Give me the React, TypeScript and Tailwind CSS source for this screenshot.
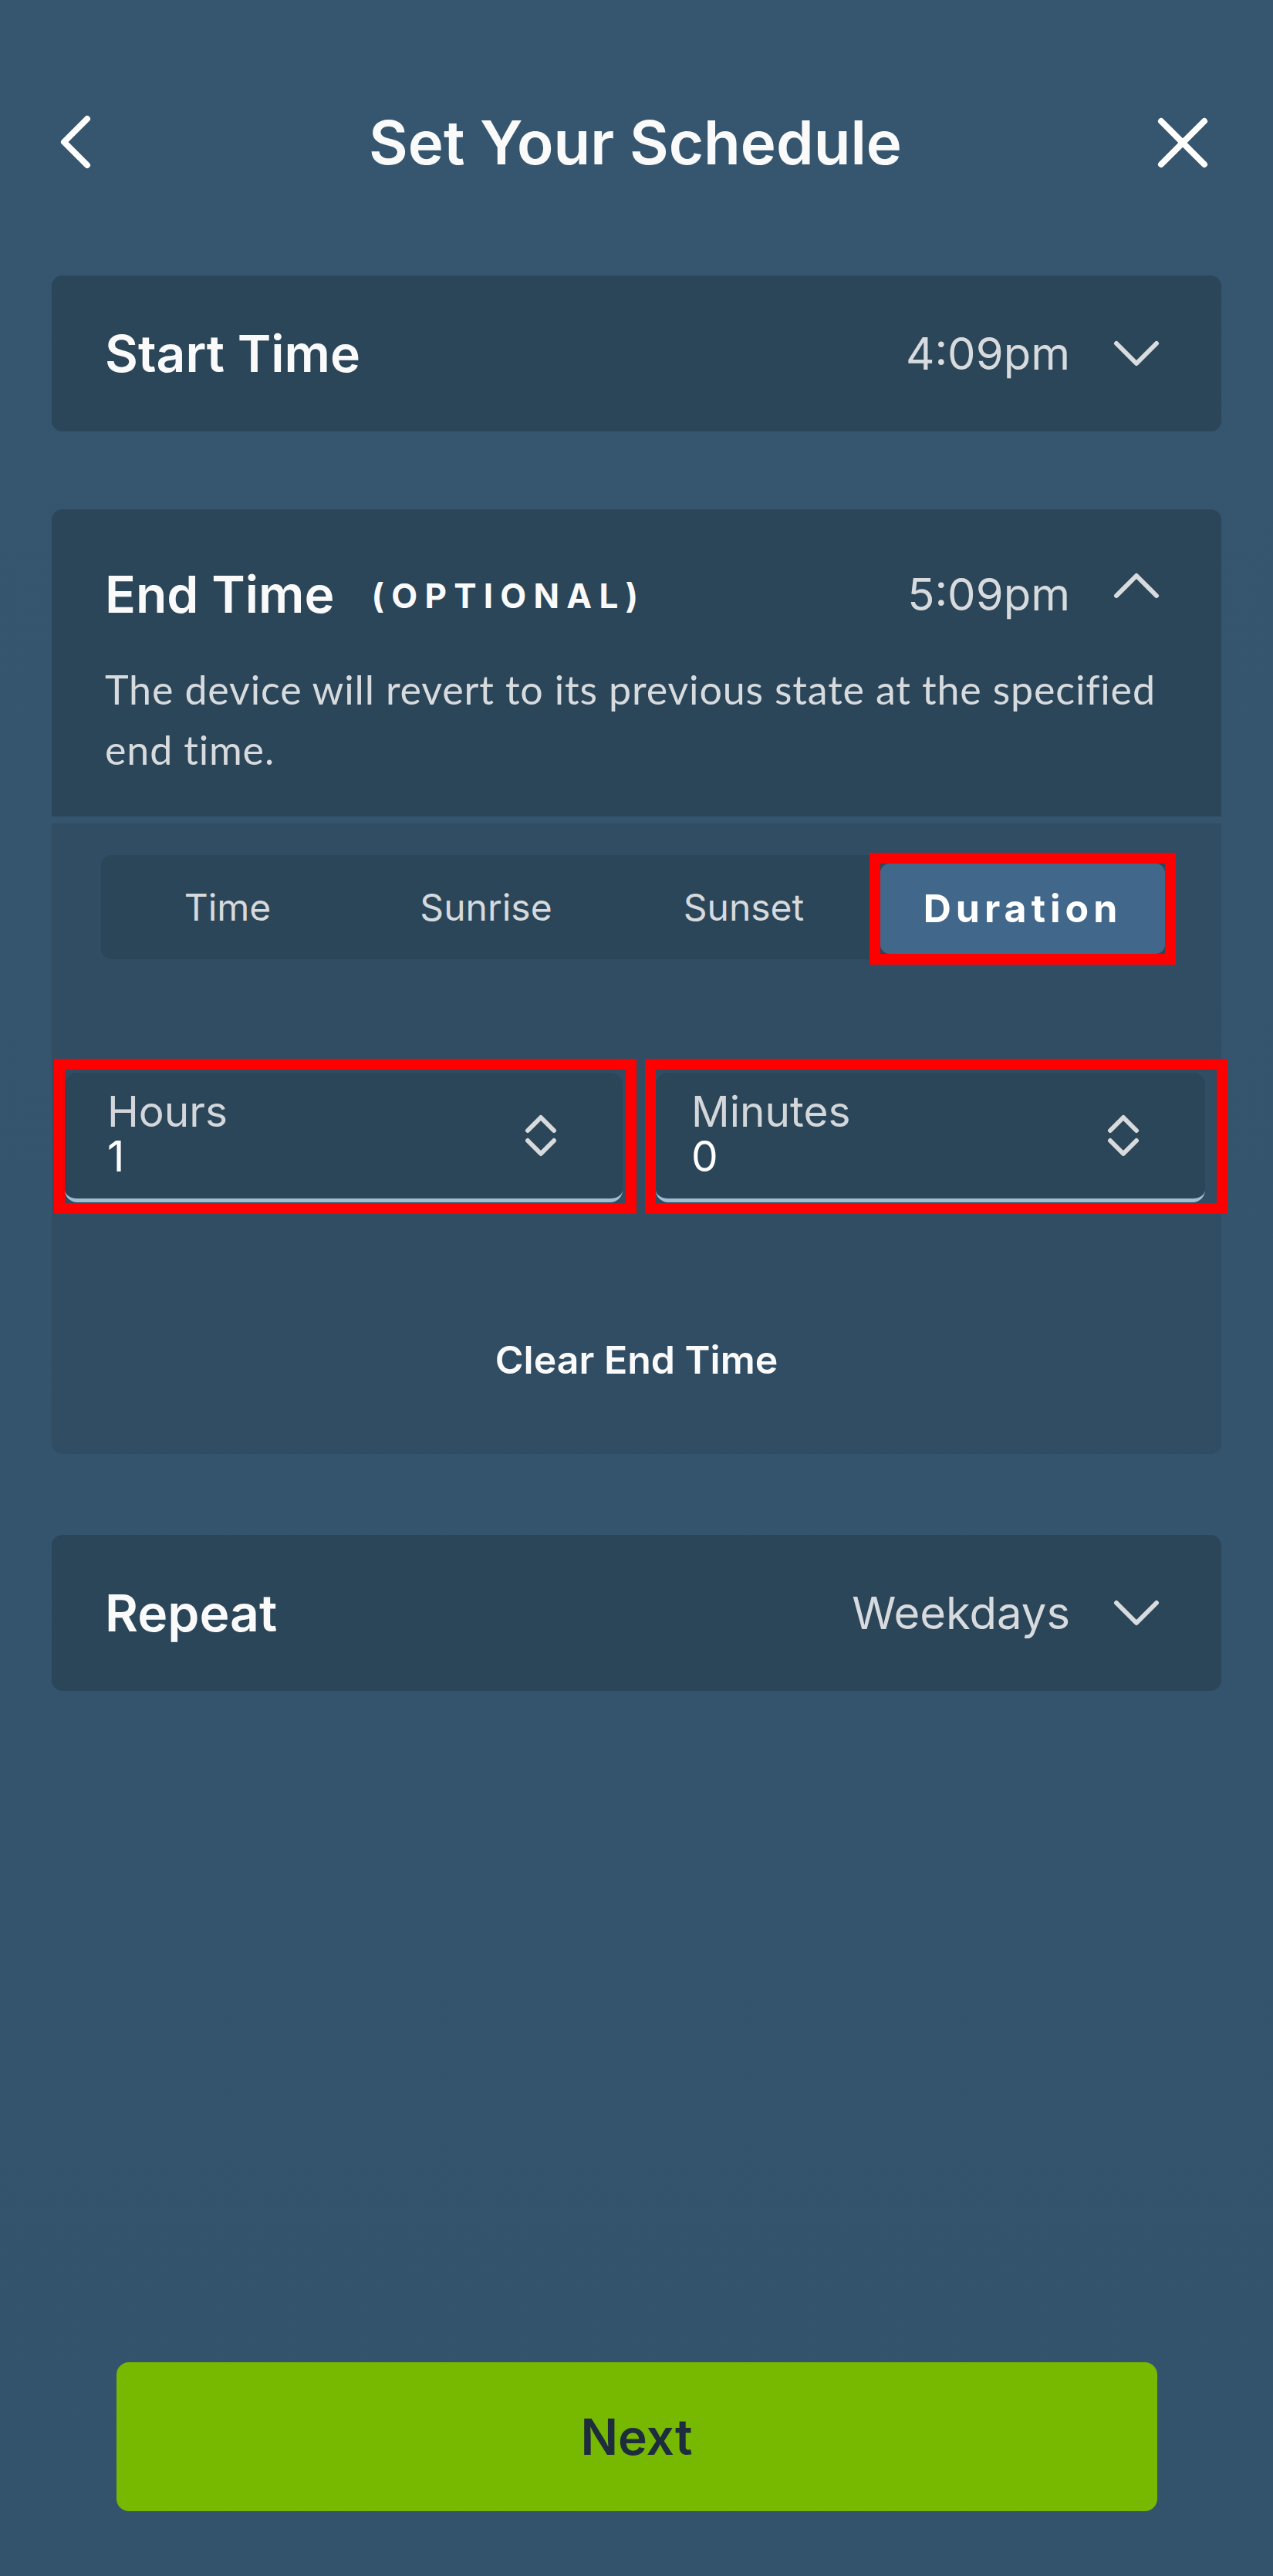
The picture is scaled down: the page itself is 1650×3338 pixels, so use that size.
import React from "react";

function ChevronLeft() {
  return (
    <svg width="44" height="72" viewBox="0 0 44 72" fill="none">
      <path d="M35 5 L5 35 L35 65" stroke="#ffffff" strokeWidth="8" strokeLinecap="round" strokeLinejoin="round" />
    </svg>
  );
}

function CloseIcon() {
  return (
    <svg width="72" height="72" viewBox="0 0 72 72" fill="none">
      <path d="M8 8 L64 64 M64 8 L8 64" stroke="#ffffff" strokeWidth="8" strokeLinecap="round" />
    </svg>
  );
}

function ChevronDown() {
  return (
    <svg width="60" height="36" viewBox="0 0 60 36" fill="none">
      <path d="M4 5 L30 31 L56 5" stroke="#d9dcdf" strokeWidth="6" strokeLinecap="round" strokeLinejoin="round" />
    </svg>
  );
}

function ChevronUp() {
  return (
    <svg width="60" height="36" viewBox="0 0 60 36" fill="none">
      <path d="M4 31 L30 5 L56 31" stroke="#d9dcdf" strokeWidth="6" strokeLinecap="round" strokeLinejoin="round" />
    </svg>
  );
}

function UpDown() {
  return (
    <svg width="44" height="56" viewBox="0 0 44 56" fill="none">
      <path d="M5 21 L22 4 L39 21 M5 34 L22 51 L39 34" stroke="#d8dadc" strokeWidth="6" strokeLinecap="round" strokeLinejoin="round" />
    </svg>
  );
}

function RowCard({ label, value }: { label: string; value: string }) {
  return (
    <div className="flex h-[202px] items-center justify-between rounded-[14px] bg-[#2b4559] pl-[69px] pr-[80px]">
      <span className="text-[66px] font-semibold text-[#fafafa]">{label}</span>
      <div className="flex items-center gap-[56px]">
        <span className="text-[58px] text-[#d7dbde]">{value}</span>
        <ChevronDown />
      </div>
    </div>
  );
}

function NumberField({ label, value, className }: { label: string; value: string; className: string }) {
  return (
    <div className="w-[755px] shrink-0 border-[14px] border-[#ff0000]">
      <div
        className={
          "mt-[4px] mb-[1px] flex h-[168px] items-center justify-between rounded-[16px] border-b-[5px] border-[#a1bdd2] bg-[#2b4559] pr-[84px] " +
          className
        }
      >
        <div className="flex flex-col pb-[6px]">
          <span className="text-[55px] leading-[58px] text-[#d3d7da]">{label}</span>
          <span className="text-[55px] leading-[58px] text-[#ffffff]">{value}</span>
        </div>
        <UpDown />
      </div>
    </div>
  );
}

export default function App() {
  const tabs = [
    { label: "Time", w: "w-[328px]" },
    { label: "Sunrise", w: "w-[342px]" },
    { label: "Sunset", w: "w-[326px]" },
  ];

  return (
    <div className="flex h-[3338px] w-[1650px] flex-col bg-gradient-to-b from-[#36566f] to-[#32536b] font-['Inter',sans-serif]">
      <header className="mt-[130px] grid h-[110px] grid-cols-[1fr_auto_1fr] items-center pl-[78px] pr-[81px]">
        <div>
          <ChevronLeft />
        </div>
        <h1 className="text-[78px] leading-none font-semibold text-[#fafafa]">Set Your Schedule</h1>
        <div className="flex justify-end">
          <CloseIcon />
        </div>
      </header>

      <main className="mt-[117px] flex flex-col px-[67px]">
        <RowCard label="Start Time" value="4:09pm" />

        <section className="mt-[101px]">
          <div className="rounded-t-[14px] bg-[#2b4559] pl-[69px] pr-[40px] pt-[60px] pb-[48px]">
            <div className="mr-[40px] flex h-[100px] items-center justify-between">
              <div className="flex items-center gap-[48px]">
                <span className="text-[66px] font-semibold text-[#fafafa]">End Time</span>
                <span className="mt-[4px] text-[44px] font-bold tracking-[0.21em] text-[#fafafa]">(OPTIONAL)</span>
              </div>
              <div className="flex items-center gap-[56px]">
                <span className="text-[58px] text-[#d7dbde]">5:09pm</span>
                <div className="mb-[22px]">
                  <ChevronUp />
                </div>
              </div>
            </div>
            <p className="mt-[34px] font-['Lato',sans-serif] text-[52px] leading-[78px] tracking-[0.016em] text-[#d7dbde]">
              The device will revert to its previous state at the specified end time.
            </p>
          </div>

          <div className="mt-[9px] rounded-b-[14px] bg-[#304d63] pt-[41px] pb-[92px]">
            <div className="ml-[64px] flex h-[135px] w-[1384px] items-center rounded-[14px] bg-[#2b4559]">
              {tabs.map((t) => (
                <div key={t.label} className={"flex shrink-0 items-center justify-center text-[48px] text-[#d6dadd] " + t.w}>
                  {t.label}
                </div>
              ))}
              <div className="mt-[3px] w-[397px] shrink-0 border-[14px] border-[#ff0000]">
                <div className="flex h-[117px] items-center justify-center rounded-[12px] bg-[#41678a] text-[50px] font-bold tracking-[0.12em] text-[#ffffff]">
                  Duration
                </div>
              </div>
            </div>

            <div className="mt-[129px] ml-[3px] flex gap-[11px]">
              <NumberField label="Hours" value="1" className="mr-[4px] pl-[55px]" />
              <NumberField label="Minutes" value="0" className="mr-[15px] pl-[46px]" />
            </div>

            <div className="mt-[159px] text-center text-[50px] leading-[60px] font-semibold text-[#fafafa]">
              Clear End Time
            </div>
          </div>
        </section>

        <div className="mt-[105px]">
          <RowCard label="Repeat" value="Weekdays" />
        </div>
      </main>

      <div className="mt-auto mb-[84px] flex justify-center">
        <button className="flex h-[193px] w-[1349px] items-center justify-center rounded-[16px] bg-[#76b900] text-[64px] font-semibold text-[#1e2d3e]">
          Next
        </button>
      </div>
    </div>
  );
}
